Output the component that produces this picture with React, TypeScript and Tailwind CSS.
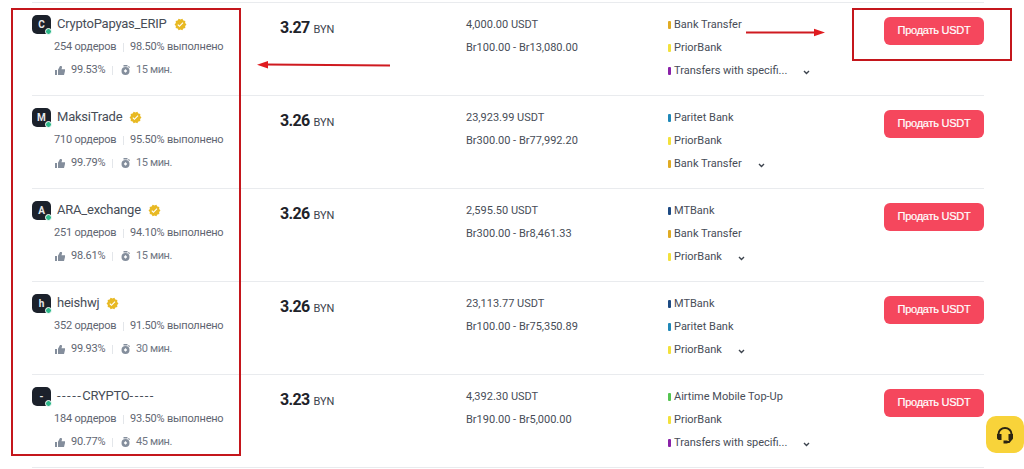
import React from "react";
import { MdVerified } from "react-icons/md";

interface Payment {
  name: string;
  color: string;
}

interface Offer {
  name: string;
  letter: string;
  verified: boolean;
  orders: string;
  completion: string;
  rating: string;
  minutes: string;
  price: string;
  available: string;
  limits: string;
  payments: Payment[];
  expandable: boolean;
}

const bankTransfer: Payment = { name: "Bank Transfer", color: "bg-[#e0ab24]" };
const priorBank: Payment = { name: "PriorBank", color: "bg-[#f3e13c]" };
const mtBank: Payment = { name: "MTBank", color: "bg-[#1d4a83]" };
const paritetBank: Payment = { name: "Paritet Bank", color: "bg-[#1f88b8]" };
const transfers: Payment = {
  name: "Transfers with specifi...",
  color: "bg-[#8a22a8]",
};
const airtime: Payment = {
  name: "Airtime Mobile Top-Up",
  color: "bg-[#55c450]",
};

const offers: Offer[] = [
  {
    name: "CryptoPapyas_ERIP",
    letter: "C",
    verified: true,
    orders: "254",
    completion: "98.50%",
    rating: "99.53%",
    minutes: "15",
    price: "3.27",
    available: "4,000.00 USDT",
    limits: "Br100.00 - Br13,080.00",
    payments: [bankTransfer, priorBank, transfers],
    expandable: true,
  },
  {
    name: "MaksiTrade",
    letter: "M",
    verified: true,
    orders: "710",
    completion: "95.50%",
    rating: "99.79%",
    minutes: "15",
    price: "3.26",
    available: "23,923.99 USDT",
    limits: "Br300.00 - Br77,992.20",
    payments: [paritetBank, priorBank, bankTransfer],
    expandable: true,
  },
  {
    name: "ARA_exchange",
    letter: "A",
    verified: true,
    orders: "251",
    completion: "94.10%",
    rating: "98.61%",
    minutes: "15",
    price: "3.26",
    available: "2,595.50 USDT",
    limits: "Br300.00 - Br8,461.33",
    payments: [mtBank, bankTransfer, priorBank],
    expandable: true,
  },
  {
    name: "heishwj",
    letter: "h",
    verified: true,
    orders: "352",
    completion: "91.50%",
    rating: "99.93%",
    minutes: "30",
    price: "3.26",
    available: "23,113.77 USDT",
    limits: "Br100.00 - Br75,350.89",
    payments: [mtBank, paritetBank, priorBank],
    expandable: true,
  },
  {
    name: "-----CRYPTO-----",
    letter: "-",
    verified: false,
    orders: "184",
    completion: "93.50%",
    rating: "90.77%",
    minutes: "45",
    price: "3.23",
    available: "4,392.30 USDT",
    limits: "Br190.00 - Br5,000.00",
    payments: [airtime, priorBank, transfers],
    expandable: true,
  },
];

const ThumbIcon = () => (
  <svg className="h-[9px] w-[10px] shrink-0" viewBox="0 0 20 18" fill="#848e9c">
    <path d="M0 8h4v10H0z" />
    <path d="M6 7.500 10 0h2c2 0 2.500 1.500 2 3l-1 3.500h7V10l-2 8H6z" />
  </svg>
);

const TimerIcon = () => (
  <svg className="h-[10px] w-[9px] shrink-0" viewBox="0 0 18 20">
    <path d="M5 0h8v3H5z" fill="#848e9c" />
    <path d="m14 3 2-1 2 3-2 1z" fill="#848e9c" />
    <circle cx="9" cy="12" r="8" fill="#848e9c" />
    <path d="m9 8 3.500 4L9 15.500 5.500 12z" fill="#fff" />
  </svg>
);

const ChevronIcon = () => (
  <svg className="h-[5px] w-[7px]" viewBox="0 0 7 5" fill="none">
    <path d="m1 1 2.500 2.500L6 1" stroke="#3c434d" strokeWidth="1.400" />
  </svg>
);

const HeadsetIcon = () => (
  <svg className="h-[18px] w-[18px]" viewBox="0 0 18 18" fill="none">
    <path
      d="M2.500 9V8a6.500 6 0 0 1 13 0v5l-2.500 3h-2"
      stroke="#2b2512"
      strokeWidth="2"
    />
    <path
      d="M1 8h4.500v6H2.500L1 12.500zM12.500 8H17v4.500L15.500 14h-3z"
      fill="#2b2512"
    />
    <path d="M7.500 14.500h4v3h-4z" fill="#2b2512" />
  </svg>
);

const Divider = () => <span className="h-[9px] w-px bg-[#e3e6ea]" />;

// Runs of dashes are set wider than the letters
const TraderName = ({ name }: { name: string }) => (
  <span className="ml-[6px] text-[13px] text-[#474d57]">
    {name.split(/(-+)/).map((part, i) => (
      <span
        key={i}
        className={
          part.startsWith("-") ? "tracking-[1.450px]" : "tracking-[-0.220px]"
        }
      >
        {part}
      </span>
    ))}
  </span>
);

const OfferRow = ({ offer }: { offer: Offer }) => (
  <div className="grid h-[93px] grid-cols-[248px_186px_202px_216px_100px] border-b border-[#e9ebee]">
    <div className="pt-[11px]">
      <div className="flex h-[20px] items-center">
        <div className="relative flex h-[19px] w-[19px] items-center justify-center rounded-[5px] bg-[#1b212b] text-[10px] font-bold text-[#e6e8ea]">
          {offer.letter}
          <span className="absolute -right-px -bottom-px h-[7px] w-[7px] rounded-full border border-white bg-[#2eb88a]" />
        </div>
        <TraderName name={offer.name} />
        {offer.verified && (
          <MdVerified className="ml-[7px] h-[13px] w-[13px] text-[#e8b923]" />
        )}
      </div>
      <div className="mt-[3px] ml-[22px] flex h-[20px] items-center text-[11px] tracking-[-0.220px] text-[#5f6672]">
        <span className="w-[69px]">{offer.orders} ордеров</span>
        <Divider />
        <span className="ml-[6px]">{offer.completion} выполнено</span>
      </div>
      <div className="mt-[3px] ml-[23px] flex h-[20px] items-center text-[11px] tracking-[-0.220px] text-[#5f6672]">
        <ThumbIcon />
        <span className="ml-[6px] w-[41px]">{offer.rating}</span>
        <Divider />
        <span className="ml-[8px] flex items-center gap-[6px] tracking-[-0.400px] text-[#707784]">
          <TimerIcon />
          {offer.minutes} мин.
        </span>
      </div>
    </div>
    <div className="flex h-[20px] items-baseline gap-[4px] pt-[15px] text-[#1e2329]">
      <span className="text-[16px] leading-[20px] font-bold tracking-[-0.700px]">
        {offer.price}
      </span>
      <span className="text-[11px] text-[#3c434d]">BYN</span>
    </div>
    <div className="pt-[12px] text-[11px] leading-[20px] text-[#474d57]">
      <div>{offer.available}</div>
      <div className="mt-[3px]">{offer.limits}</div>
    </div>
    <div className="flex flex-col gap-[3px] pt-[12px] text-[11px] leading-[20px] text-[#474d57]">
      {offer.payments.map((payment, i) => (
        <div key={payment.name} className="flex h-[20px] items-center">
          <span className={`h-[8px] w-[3px] rounded-[1px] ${payment.color}`} />
          <span className="ml-[3px]">{payment.name}</span>
          {offer.expandable && i === offer.payments.length - 1 && (
            <span className="ml-[16px] pt-[2px]">
              <ChevronIcon />
            </span>
          )}
        </div>
      ))}
    </div>
    <button className="mt-[13.500px] h-[28px] rounded-[6px] bg-[#f5475d] font-['Liberation_Sans',sans-serif] text-[11px] tracking-[-0.250px] text-white [-webkit-text-stroke:0.2px_white]">
      Продать USDT
    </button>
  </div>
);

const App: React.FC = () => {
  return (
    <div className="relative h-[469px] w-[1024px] overflow-hidden bg-white pt-[2px] font-[Roboto,sans-serif]">
      <div className="ml-[32px] w-[952px] border-t border-[#e9ebee]">
        {offers.map((offer) => (
          <OfferRow key={offer.name} offer={offer} />
        ))}
      </div>

      {/* Hand-drawn highlights over the table */}
      <div className="absolute top-[8px] left-[11px] h-[448px] w-[230px] border-2 border-[#c4161c]" />
      <div className="absolute top-[8px] left-[852px] h-[53px] w-[160px] border-2 border-[#c4161c]" />
      <svg
        className="absolute top-[60px] left-[256px] h-[11px] w-[136px]"
        viewBox="0 0 136 11"
      >
        <path d="M10 4.500 134 5.500" stroke="#cf1a20" strokeWidth="2" />
        <path d="M1 4.700 12 1v7.500z" fill="#e01b1f" />
      </svg>
      <svg
        className="absolute top-[27px] left-[746px] h-[11px] w-[80px]"
        viewBox="0 0 80 11"
      >
        <path d="M0 5.500h70" stroke="#cf1a20" strokeWidth="2" />
        <path d="M79 5.500 68 1.800v7.500z" fill="#e01b1f" />
      </svg>

      <button className="absolute top-[416px] left-[986px] flex h-[37px] w-[38px] items-center justify-center rounded-[10px] bg-[#f8d33a]">
        <HeadsetIcon />
      </button>
    </div>
  );
};

export default App;
